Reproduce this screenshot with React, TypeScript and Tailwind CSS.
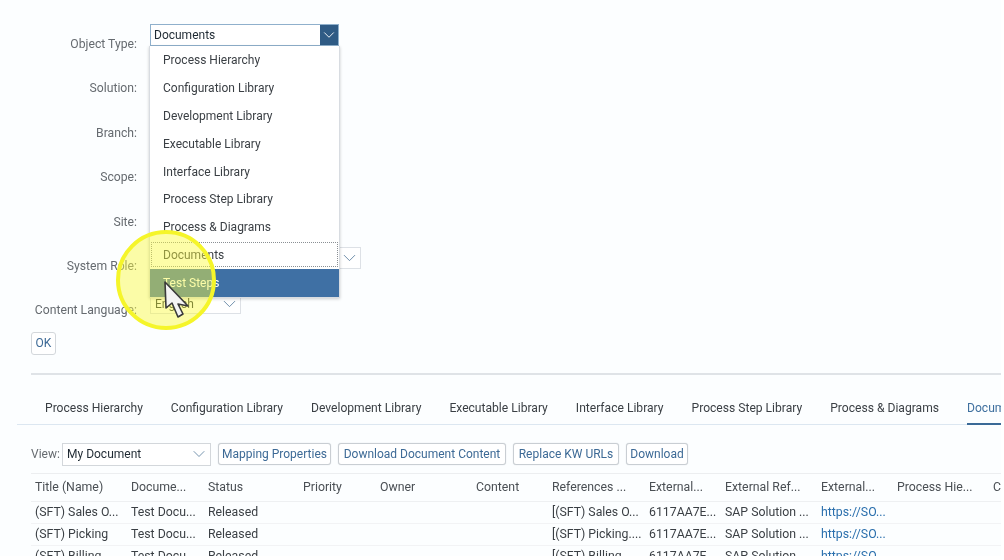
import { ChevronDown } from 'lucide-react';

const formRows = [
  'Object Type:',
  'Solution:',
  'Branch:',
  'Scope:',
  'Site:',
  'System Role:',
  'Content Language:',
];

const menuItems = [
  'Process Hierarchy',
  'Configuration Library',
  'Development Library',
  'Executable Library',
  'Interface Library',
  'Process Step Library',
  'Process & Diagrams',
];

const tabs = [
  'Process Hierarchy',
  'Configuration Library',
  'Development Library',
  'Executable Library',
  'Interface Library',
  'Process Step Library',
  'Process & Diagrams',
];

const columns = [
  'Title (Name)',
  'Docume...',
  'Status',
  'Priority',
  'Owner',
  'Content',
  'References ...',
  'External...',
  'External Ref...',
  'External...',
  'Process Hie...',
  'C',
];

const rows = [
  ['(SFT) Sales O...', 'Test Docu...', 'Released', '', '', '', '[(SFT) Sales O...', '6117AA7E...', 'SAP Solution ...', 'https://SO...'],
  ['(SFT) Picking', 'Test Docu...', 'Released', '', '', '', '[(SFT) Picking....', '6117AA7E...', 'SAP Solution ...', 'https://SO...'],
  ['(SFT) Billing', 'Test Docu...', 'Released', '', '', '', '[(SFT) Billing....', '6117AA7E...', 'SAP Solution ...', 'https://SO...'],
];

const colGrid = 'grid grid-cols-[96px_77px_95px_77px_96px_76px_97px_76px_96px_76px_96px_20px]';

function Toolbutton({ label, className }: { label: string; className: string }) {
  return (
    <button className={`h-[22px] rounded-[3px] border border-[#c9ced3] bg-white text-center text-[12px] text-[#3d6a96] shadow-[0_0_1px_#c9ced3] ${className}`}>
      {label}
    </button>
  );
}

function FormControl({ index }: { index: number }) {
  // the selects sit above the label line, the menu covers the ones in between
  if (index === 0) {
    return (
      <div className="-mt-[18px] flex h-[22px] w-[189px] border border-[#8fb0cc] bg-white">
        <span className="flex-1 pl-[3px] text-[12px] leading-[20px] text-[#1f2a33]">Documents</span>
        <span className="flex w-[18px] items-center justify-center bg-[#2f5b85] text-white">
          <ChevronDown size={20} strokeWidth={1.2} />
        </span>
      </div>
    );
  }
  if (index === 5) {
    return (
      <div className="-mt-[17px] flex h-[22px] w-[211px] justify-end border border-[#dde1e6] bg-white">
        <span className="flex w-[21px] items-center justify-center text-[#5b7f9f]">
          <ChevronDown size={22} strokeWidth={1} />
        </span>
      </div>
    );
  }
  if (index === 6) {
    return (
      <div className="-mt-[13px] flex h-[19px] w-[91px] items-center border border-[#dde1e6] bg-white pl-1 text-[12px] text-[#1f2a33]">
        <span className="flex-1">English</span>
        <span className="flex w-[21px] items-center justify-center text-[#5b7f9f]">
          <ChevronDown size={22} strokeWidth={1} />
        </span>
      </div>
    );
  }
  return null;
}

export default function App() {
  return (
    <div className="h-[560px] w-[1004px] overflow-hidden bg-white">
      <div
        className="relative h-[556px] w-[1001px] overflow-hidden bg-[#fcfeff] text-[12px] text-[#32363a] blur-[0.35px]"
        style={{ fontFamily: 'Roboto, "Noto Sans", sans-serif' }}
      >
        {/* Settings form */}
        <div className="flex flex-col pt-[22px]">
          {formRows.map((label, i) => (
            <div key={label} className="flex h-[44.4px] items-center gap-[13px]">
              <label className="w-[137px] shrink-0 text-right text-[12.2px] text-[#666b70]">{label}</label>
              <FormControl index={i} />
            </div>
          ))}
        </div>

        <div className="ml-[31px] mt-[-1px]">
          <button className="h-[23px] w-[25px] rounded-[3px] border border-[#d3d7db] bg-white text-[#3d6a96]">OK</button>
        </div>

        <div className="ml-[31px] mt-[18px] h-[2px] bg-[#dfe3e7]" />

        {/* Tabs */}
        <div className="ml-[17px] mt-[24px] flex h-[26px] gap-[28px] whitespace-nowrap border-b border-[#dce7f1] pl-[28px] text-[12.1px]">
          {tabs.map((tab) => (
            <span key={tab} className="text-[#3a3f44]">{tab}</span>
          ))}
          <span className="h-[26px] border-b-2 border-[#3a6a97] text-[#3f709f]">Documents</span>
        </div>

        {/* Toolbar */}
        <div className="ml-[31px] mt-[18px] flex items-center">
          <span className="w-[31px] text-[#666b70]">View:</span>
          <div className="flex h-[23px] w-[149px] items-center border border-[#d3d7db] bg-white pl-1 text-[#1f2a33]">
            <span className="flex-1">My Document</span>
            <ChevronDown className="mr-[1px] text-[#5b7f9f]" size={20} strokeWidth={1} />
          </div>
          <div className="ml-[7px] flex gap-[7px]">
            <Toolbutton label="Mapping Properties" className="w-[113px]" />
            <Toolbutton label="Download Document Content" className="w-[168px]" />
            <Toolbutton label="Replace KW URLs" className="w-[106px]" />
            <Toolbutton label="Download" className="w-[62px]" />
          </div>
        </div>

        {/* Table */}
        <div className="ml-[31px] mt-[7px] border-t border-[#eceef0] text-[12.3px]">
          <div className={`${colGrid} h-[28px] items-center whitespace-nowrap border-b border-[#eef0f2]`}>
            {columns.map((col, i) => (
              <span key={i} className="pl-1 text-[#4a4f54]">{col}</span>
            ))}
          </div>
          {rows.map((row) => (
            <div key={row[0]} className={`${colGrid} h-[22px] items-center whitespace-nowrap border-b border-[#f2f3f5]`}>
              {row.map((cell, i) => (
                <span key={i} className={i === 9 ? 'pl-1 text-[#2a6fad]' : 'pl-1 text-[#3a3f44]'}>{cell}</span>
              ))}
            </div>
          ))}
        </div>

        {/* Open dropdown list */}
        <div className="absolute left-[149px] top-[46px] w-[191px] border border-t-0 border-[#d8dce1] bg-white shadow-[0_1px_3px_rgba(0,0,0,0.2)]">
          {menuItems.map((item) => (
            <div key={item} className="flex h-[27.9px] items-center pl-[13px] text-[#3a3f44]">{item}</div>
          ))}
          <div className="mx-[1px] mt-[1px] flex h-[25px] items-center border border-dotted border-[#8a8f94] pl-[11px] pt-[1px] text-[#3a3f44]">Documents</div>
          <div className="mt-[2px] flex h-[28px] items-center bg-[#3f70a4] pl-[13px] text-white">Test Steps</div>
        </div>

        {/* Cursor highlight from the screen recording */}
        <div className="pointer-events-none absolute left-[116px] top-[230px] h-[100px] w-[100px] rounded-full border-[4px] border-[#f5f52a] bg-[#fbfb3c]/45" />
        <svg className="pointer-events-none absolute left-[160px] top-[279px]" width="34" height="42" viewBox="0 0 34 42">
          <path d="M5 3 L6 29 L12 24 L18 38 L23 35 L18 25 L28 27 Z" fill="#f4f4f4" stroke="#3a3a3a" strokeWidth="1.6" strokeLinejoin="round" />
        </svg>
      </div>
    </div>
  );
}
